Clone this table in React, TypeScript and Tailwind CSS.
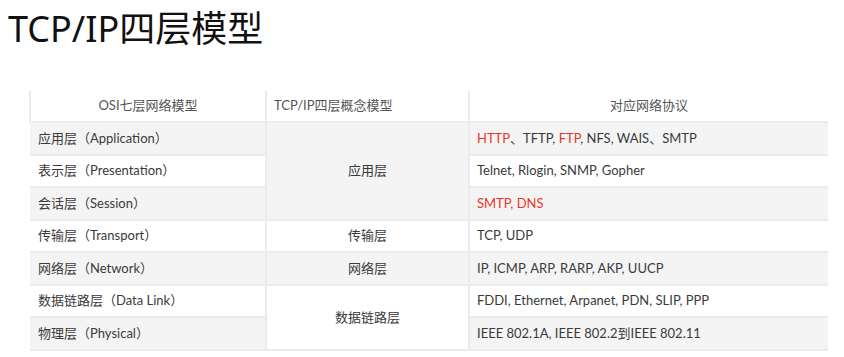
type Row = {
  osi: string;
  tcp?: { label: string; span: number };
  proto: { text: string; red?: boolean }[];
};

const rows: Row[] = [
  {
    osi: "应用层（Application）",
    tcp: { label: "应用层", span: 3 },
    proto: [
      { text: "HTTP", red: true },
      { text: "、TFTP, " },
      { text: "FTP", red: true },
      { text: ", NFS, WAIS、SMTP" },
    ],
  },
  { osi: "表示层（Presentation）", proto: [{ text: "Telnet, Rlogin, SNMP, Gopher" }] },
  { osi: "会话层（Session）", proto: [{ text: "SMTP, DNS", red: true }] },
  {
    osi: "传输层（Transport）",
    tcp: { label: "传输层", span: 1 },
    proto: [{ text: "TCP, UDP" }],
  },
  {
    osi: "网络层（Network）",
    tcp: { label: "网络层", span: 1 },
    proto: [{ text: "IP, ICMP, ARP, RARP, AKP, UUCP" }],
  },
  {
    osi: "数据链路层（Data Link）",
    tcp: { label: "数据链路层", span: 2 },
    proto: [{ text: "FDDI, Ethernet, Arpanet, PDN, SLIP, PPP" }],
  },
  { osi: "物理层（Physical）", proto: [{ text: "IEEE 802.1A, IEEE 802.2到IEEE 802.11" }] },
];

export default function App() {
  return (
    <div className="w-[844px] h-[357px] bg-white overflow-hidden">
      <h1 className="ml-[8px] mt-[11px] text-[36px] leading-[36px] text-[#111] font-normal font-['Noto_Sans','Noto_Sans_CJK_SC',sans-serif]">
        TCP/IP四层模型
      </h1>

      <table className="ml-[29px] mt-[44px] w-[798px] table-fixed border-collapse text-[13px] text-[#3a3a3a] font-['Lato','Noto_Sans_CJK_SC',sans-serif]">
        <colgroup>
          <col className="w-[236px]" />
          <col className="w-[203px]" />
          <col className="w-[359px]" />
        </colgroup>
        <thead>
          <tr className="h-[31px] bg-white text-[#555]">
            <th className="font-normal text-center border-l-2 border-b-2 border-[#ebebeb]">OSI七层网络模型</th>
            <th className="font-normal text-left pl-[7px] border-l-2 border-b-2 border-[#ebebeb]">TCP/IP四层概念模型</th>
            <th className="font-normal text-center border-l-2 border-b-2 border-[#ebebeb]">对应网络协议</th>
          </tr>
        </thead>
        <tbody>
          {rows.map((r, i) => (
            <tr
              key={r.osi}
              className={`${i % 2 === 0 ? "bg-[#f4f4f4] h-[33px]" : "bg-white h-[32px]"}`}
            >
              <td className="pl-[8px] border-b-2 border-[#ebebeb] whitespace-nowrap">{r.osi}</td>
              {r.tcp && (
                <td
                  rowSpan={r.tcp.span}
                  className="text-center border-l-2 border-b-2 border-[#ebebeb]"
                >
                  {r.tcp.label}
                </td>
              )}
              <td className="pl-[7px] border-l-2 border-b-2 border-[#ebebeb] whitespace-nowrap">
                {r.proto.map((p, j) => (
                  <span key={j} className={p.red ? "text-[#e8342b]" : undefined}>
                    {p.text}
                  </span>
                ))}
              </td>
            </tr>
          ))}
        </tbody>
      </table>
    </div>
  );
}
